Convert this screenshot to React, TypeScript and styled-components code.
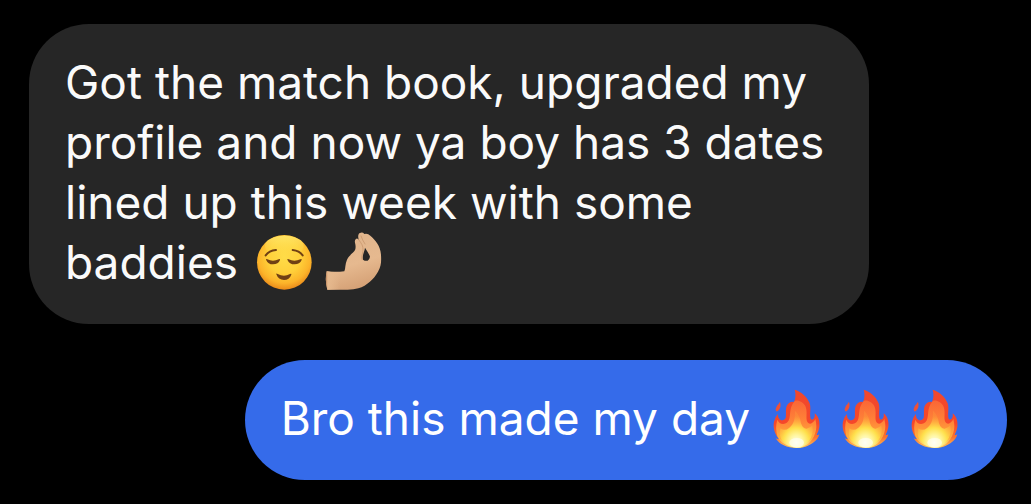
import React from "react";
import styled, { createGlobalStyle } from "styled-components";

const GlobalStyle = createGlobalStyle`
  body {
    margin: 0;
    background: #000;
    font-family: Inter, "Liberation Sans", sans-serif;
  }
`;

const Thread = styled.main`
  display: flex;
  flex-direction: column;
  gap: 36px;
  padding: 24px 24px 24px 29px;
`;

const Bubble = styled.p<{ $sent?: boolean }>`
  box-sizing: border-box;
  align-self: ${(p) => (p.$sent ? "flex-end" : "flex-start")};
  max-width: 840px;
  margin: 0;
  padding: 28px 36px 32px;
  border-radius: 60px;
  background: ${(p) => (p.$sent ? "#356bea" : "#262626")};
  color: ${(p) => (p.$sent ? "#fff" : "#fafafa")};
  font-size: 46px;
  line-height: 60px;
`;

const EmojiRow = styled.span<{ $start: number }>`
  display: inline-flex;
  gap: 11px;
  margin: -4px 3px 0 ${(p) => p.$start}px;
  vertical-align: -13px;
`;

const Glyph = styled.svg`
  display: block;
  width: 58px;
  height: 60px;
`;

function Relieved() {
  return (
    <Glyph viewBox="18 18 174 180" role="img" aria-label="relieved face">
      <defs>
        <radialGradient id="skin" cx="0.5" cy="0.4" r="0.6">
          <stop offset="0" stopColor="#ffdc48" />
          <stop offset="0.5" stopColor="#ffd03a" />
          <stop offset="0.8" stopColor="#fcb42a" />
          <stop offset="1" stopColor="#ea8a1a" />
        </radialGradient>
        <linearGradient id="shine" x1="0" y1="0" x2="0" y2="1">
          <stop offset="0" stopColor="#fff27c" stopOpacity="0.7" />
          <stop offset="1" stopColor="#ffe04f" stopOpacity="0" />
        </linearGradient>
      </defs>
      <circle cx="103" cy="109" r="82" fill="url(#skin)" />
      <ellipse cx="103" cy="60" rx="58" ry="31" fill="url(#shine)" />
      <g fill="none" stroke="#704014" strokeLinecap="round">
        <path d="M47 88Q57 74 78 72" strokeWidth="6" />
        <path d="M128 72Q148 74 158 88" strokeWidth="6" />
      </g>
      <g fill="#704014">
        <path d="M48 101Q48 98 52 100Q69 108 86 100Q91 98 90 102Q85 115 69 115Q54 115 48 101Z" />
        <path d="M112 101Q112 98 116 100Q133 108 151 100Q156 98 155 102Q149 115 134 115Q118 115 112 101Z" />
        <path d="M79 145Q78 141 83 144Q102 155 120 144Q125 141 124 146Q118 162 102 162Q85 162 79 145Z" />
      </g>
    </Glyph>
  );
}

function PinchedFingers() {
  return (
    <Glyph viewBox="24 18 174 180" role="img" aria-label="pinched fingers">
      <defs>
        <linearGradient id="hand" x1="0.35" y1="0" x2="0.65" y2="1">
          <stop offset="0" stopColor="#dfb48c" />
          <stop offset="0.55" stopColor="#e6b98f" />
          <stop offset="1" stopColor="#d39e73" />
        </linearGradient>
        <linearGradient id="wrist" x1="0" y1="0" x2="1" y2="0">
          <stop offset="0" stopColor="#b98258" />
          <stop offset="0.14" stopColor="#e6b98e" />
          <stop offset="1" stopColor="#e6b98e" stopOpacity="0" />
        </linearGradient>
      </defs>
      <path
        fill="url(#hand)"
        d="M29 136Q56 139 82 136C86 127 84 114 90 101C97 86 112 80 115 70Q117 61 114 50Q112 40 118 38Q121 37 125 41Q120 21 132 20Q138 19 142 24Q152 21 160 29C176 43 190 59 192 86C193 106 193 120 183 137C170 160 151 178 124 187Q108 192 84 191H31Q23 164 29 136Z"
      />
      <path
        fill="url(#wrist)"
        d="M29 136Q50 139 69 137V191H31Q23 164 29 136Z"
      />
      <path
        fill="#262626"
        d="M144 65C150 75 156 83 159 92Q158 100 152 104Q145 106 138 101Q136 91 140 80Q143 73 144 65Z"
      />
      <g
        fill="none"
        stroke="#b78258"
        strokeWidth="2"
        strokeLinecap="round"
        opacity="0.7"
      >
        <path d="M125 41C134 54 139 58 138 75C136 88 132 91 135 101" />
        <path d="M132 30Q136 42 144 54" />
      </g>
    </Glyph>
  );
}

function Fire({ id }: { id: string }) {
  return (
    <Glyph viewBox="22 12 174 180" role="img" aria-label="fire">
      <defs>
        <linearGradient id={`${id}-outer`} x1="0" y1="0" x2="0" y2="1">
          <stop offset="0" stopColor="#f0482d" />
          <stop offset="0.58" stopColor="#f5472a" />
          <stop offset="0.82" stopColor="#fa7430" />
          <stop offset="1" stopColor="#ffc65a" />
        </linearGradient>
        <linearGradient id={`${id}-middle`} x1="0" y1="0" x2="0" y2="1">
          <stop offset="0" stopColor="#fa6636" />
          <stop offset="0.45" stopColor="#ff8438" />
          <stop offset="0.8" stopColor="#ffb03c" />
          <stop offset="1" stopColor="#fff397" />
        </linearGradient>
        <radialGradient id={`${id}-core`} cx="0.5" cy="0.86" r="0.72">
          <stop offset="0" stopColor="#fffff3" />
          <stop offset="0.28" stopColor="#fff6a0" />
          <stop offset="0.55" stopColor="#ffe04c" />
          <stop offset="1" stopColor="#ffa23b" stopOpacity="0.3" />
        </radialGradient>
      </defs>
      <path
        fill={`url(#${id}-outer)`}
        d="M90 17C109 23 127 37 135 58C140 75 134 91 138 104Q143 110 148 103Q152 98 150 88C162 97 166 113 164 129Q162 142 156 152Q159 154 164 151C159 169 143 181 122 188Q111 192 96 192C67 192 43 181 33 162Q37 166 43 165C31 151 24 132 28 113Q31 98 40 90Q39 104 48 108Q58 111 63 102C66 88 60 71 70 60Q77 52 88 54C93 43 94 30 90 17Z"
      />
      <path
        fill="#ee5138"
        d="M46 53Q50 67 44 76Q39 85 34 81Q31 74 37 65Q42 60 46 53Z"
      />
      <path
        fill={`url(#${id}-middle)`}
        d="M88 54C94 44 114 52 122 66C130 84 122 101 128 114Q134 122 142 117Q149 113 152 105C161 137 149 163 130 180Q114 191 96 191C70 190 45 175 38 156Q31 130 38 107C43 120 57 124 68 115C82 101 70 75 88 54Z"
      />
      <path
        fill={`url(#${id}-core)`}
        d="M91 80Q106 94 109 118Q115 135 126 134Q137 132 143 124Q149 153 131 173Q117 191 96 191C73 190 55 178 47 160Q43 147 47 133Q60 143 74 131C90 118 91 101 91 80Z"
      />
      <ellipse cx="96" cy="176" rx="22" ry="14" fill="#fffff4" opacity="0.65" />
    </Glyph>
  );
}

export default function App() {
  return (
    <>
      <GlobalStyle />
      <Thread>
        <Bubble>
          Got the match book, upgraded my profile and now ya boy has 3 dates
          lined up this week with some baddies{" "}
          <EmojiRow $start={5}>
            <Relieved />
            <PinchedFingers />
          </EmojiRow>
        </Bubble>
        <Bubble $sent>
          Bro this made my day{" "}
          <EmojiRow $start={9}>
            <Fire id="fire-a" />
            <Fire id="fire-b" />
            <Fire id="fire-c" />
          </EmojiRow>
        </Bubble>
      </Thread>
    </>
  );
}
